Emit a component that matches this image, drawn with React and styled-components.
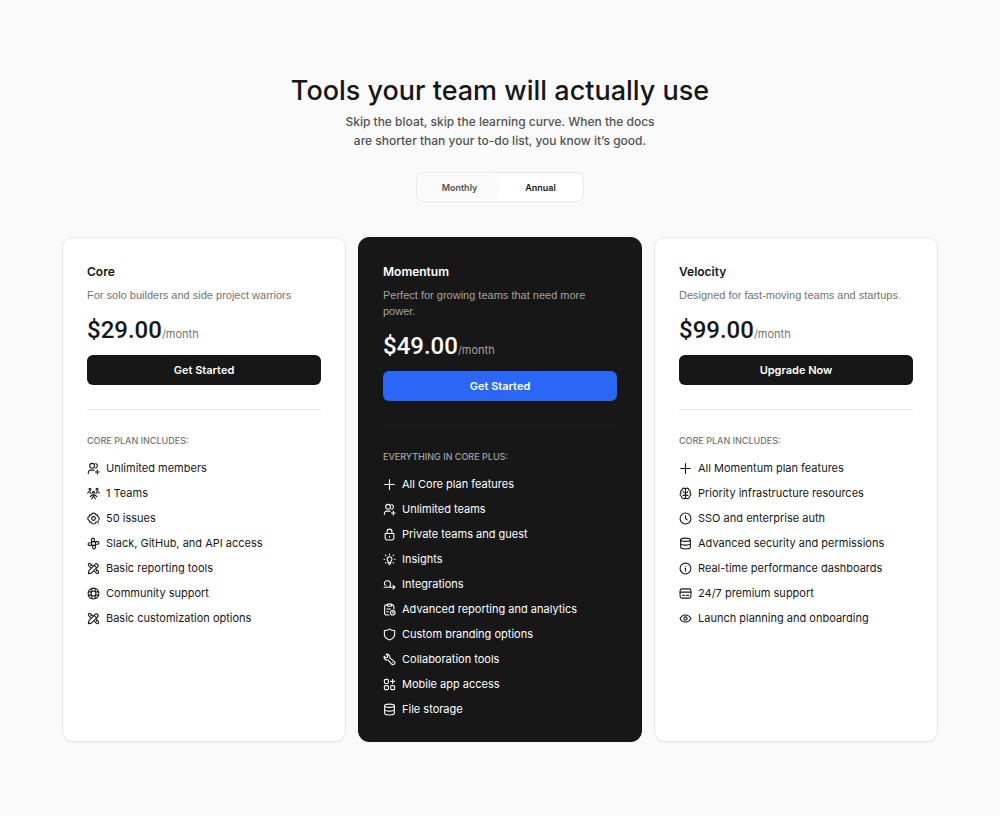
import { useState } from 'react';
import styled, { createGlobalStyle } from 'styled-components';

const icons = {
	members: <><circle cx="9.500" cy="7" r="4.500" /><path d="M16 2.700a4.500 4.500 0 0 1 0 8.600M2.500 21v-2a4 4 0 0 1 4-4H13M19 15v7M15.500 18.500h7" /></>,
	teams: <><circle cx="5.500" cy="4" r="1.800" /><circle cx="18.500" cy="4" r="1.800" /><circle cx="12" cy="9.500" r="1.800" /><path d="M1.500 11.500c.5-2 2-3 4-2.500L7.500 12M22.500 11.500c-.5-2-2-3-4-2.500L16.500 12M6 18c1.200-2.500 3-3.500 6-3.500s4.800 1 6 3.500M12 16.500L8.500 22M12 16.500l3.500 5.500" /></>,
	gear: <><path d="M18.500 19l-2-.3-1.700 2.200c-1.300 1.300-4.300 1.300-5.600 0l-1.700-2.200-2.800.3L4.300 16 2.200 14.300c-.9-1.300-.9-3.300 0-4.600L4.300 8l.4-3 2.800.3 1.700-2.200c1.300-1.300 4.300-1.300 5.600 0l1.700 2.200 2.800-.3.4 3 2.100 1.700c.9 1.300.9 3.300 0 4.600" /><circle cx="12" cy="12" r="3.500" /><path d="M20.500 15.500v3.500M20.500 22v.1" /></>,
	slack: <path d="M8.500 14V4.500a2.500 2.500 0 0 1 5 0V9M10 8.500h9.500a2.500 2.500 0 0 1 0 5H15M15.500 10v9.500a2.500 2.500 0 0 1-5 0V15M14 15.500H4.500a2.500 2.500 0 0 1 0-5H9" />,
	tools: <><path d="M7 10.500L3 6.500a2.500 2.500 0 0 1 3.500-3.500l4 4M13.500 17l4 4a2.500 2.500 0 0 0 3.500-3.500l-4-4" /><path d="M2.500 21.500l1-5.500L16 3.500c1.500-1.500 6 3 4.500 4.500L8 20.500zM13.500 6.500l4 4M7 6.500L8.500 5M17.500 17l1.500-1.500" /></>,
	support: <><circle cx="12" cy="12" r="10" /><circle cx="12" cy="12" r="4.500" /><path d="M9 8.500V2.700M15 8.500V2.700M9 15.500v5.800M15 15.500v5.800M2.700 9h5.800M2.700 15h5.800M15.500 9h5.800M15.500 15h5.800" /></>,
	plus: <path d="M12 3v18M3 12h18" />,
	lock: <><path d="M4 10h16v8.500a3.500 3.500 0 0 1-3.500 3.500h-9A3.500 3.500 0 0 1 4 18.500zM7.500 10V6.500a4.500 4.500 0 0 1 9 0V10" /><path d="M12 15.500v1.500" /></>,
	insight: <><path d="M9.500 17v-1.800A4.800 4.800 0 0 1 7.500 11.300a4.500 4.500 0 0 1 9 0c0 1.700-.7 3-2 3.900V18c0 4-5 4-5 0zM9.500 17.500h5" /><path d="M12 2v1.500M3 11.500H1.800M22.200 11.500H21M5.300 4.800l-1-1M18.700 4.800l1-1M4.500 18.500l1-1M19.500 18.500l-1-1" /></>,
	integration: <path d="M2 17h7c3 0 5-2.500 5-6s-2.500-6-5.700-6S2.500 7.500 2.500 10.500c0 1.700 1 3 3 3M13 17h9M18.500 13.500L22 17l-3.500 3.500" />,
	report: <><path d="M8 3.500H6a3 3 0 0 0-3 3V19a3 3 0 0 0 3 3h5M16 3.500h1a3 3 0 0 1 3 3V11" /><rect x="8" y="2" width="8" height="4" rx="1.500" /><path d="M7 11h7M7 16h3" /><circle cx="18" cy="18" r="4.200" /><path d="M18 16v2h1.500" /></>,
	shield: <path d="M12 2c3 2 6 2.700 9.500 2.700V11.500c0 5.500-4 8.500-9.500 10.500-5.500-2-9.500-5-9.500-10.500V4.700C6 4.700 9 4 12 2z" />,
	wrench: <><path d="M12.500 9c.5-2.500-.2-4.200-1.700-5.500C9.500 2.200 7.500 1.700 5.700 2.200l3.200 3.300-.7 2.700-2.700.7L2.200 5.700c-.6 2 0 4.400 1.500 5.800 1.400 1.300 3.300 1.800 5.300 1.300l7 7.700a3.400 3.400 0 0 0 5-4.700z" /><path d="M17.500 17.500v.1" /></>,
	apps: <><rect x="2.500" y="2.500" width="7.500" height="7.500" rx="2" /><rect x="2.500" y="14" width="7.500" height="7.500" rx="2" /><rect x="14" y="14" width="7.500" height="7.500" rx="2" /><path d="M17.800 2.500v7.500M14 6.300h7.500" /></>,
	database: <><ellipse cx="12" cy="5" rx="9" ry="3" /><path d="M3 5v14c0 1.700 4 3 9 3s9-1.300 9-3V5M3 12c0 1.700 4 3 9 3s9-1.300 9-3" /></>,
	brain: <path d="M12 5c0-4-6.500-4-6 .5-3 .3-4 3.500-2 5.500-3 1.500-2.500 5.500.5 6-.2 5 7.500 6.500 7.500 2zM12 5c0-4 6.500-4 6 .5 3 .3 4 3.500 2 5.500 3 1.500 2.500 5.500-.5 6 .2 5-7.500 6.500-7.500 2M8 8.500c.5 2 2 2.500 4 2.500M16 8.500c-.5 2-2 2.500-4 2.500M7.500 15.500c1.500 0 3 0 4.500-1.500M16.500 15.500c-1.500 0-3 0-4.500-1.500" />,
	clock: <><circle cx="12" cy="12" r="10" /><path d="M12 7v5l3 2.500" /></>,
	info: <><circle cx="12" cy="12" r="10" /><path d="M11 11.500h1.200v5M12 7.700v.1" /></>,
	card: <><rect x="2" y="3.500" width="20" height="17" rx="3.500" /><path d="M2 9.500h20M7 15.500h3M14 15.500h4" /></>,
	eye: <><path d="M2 12c2-4 5.500-6.500 10-6.500S20 8 22 12c-2 4-5.500 6.500-10 6.500S4 16 2 12z" /><circle cx="12" cy="12" r="3" /></>,
};

const plans = [
	{
		name: 'Core',
		description: 'For solo builders and side project warriors',
		price: '$29.00',
		action: 'Get Started',
		label: 'CORE PLAN INCLUDES:',
		features: [
			['members', 'Unlimited members'],
			['teams', '1 Teams'],
			['gear', '50 issues'],
			['slack', 'Slack, GitHub, and API access'],
			['tools', 'Basic reporting tools'],
			['support', 'Community support'],
			['tools', 'Basic customization options'],
		],
	},
	{
		name: 'Momentum',
		description: 'Perfect for growing teams that need more power.',
		price: '$49.00',
		action: 'Get Started',
		label: 'EVERYTHING IN CORE PLUS:',
		featured: true,
		features: [
			['plus', 'All Core plan features'],
			['members', 'Unlimited teams'],
			['lock', 'Private teams and guest'],
			['insight', 'Insights'],
			['integration', 'Integrations'],
			['report', 'Advanced reporting and analytics'],
			['shield', 'Custom branding options'],
			['wrench', 'Collaboration tools'],
			['apps', 'Mobile app access'],
			['database', 'File storage'],
		],
	},
	{
		name: 'Velocity',
		description: 'Designed for fast-moving teams and startups.',
		price: '$99.00',
		action: 'Upgrade Now',
		label: 'CORE PLAN INCLUDES:',
		features: [
			['plus', 'All Momentum plan features'],
			['brain', 'Priority infrastructure resources'],
			['clock', 'SSO and enterprise auth'],
			['database', 'Advanced security and permissions'],
			['info', 'Real-time performance dashboards'],
			['card', '24/7 premium support'],
			['eye', 'Launch planning and onboarding'],
		],
	},
];

export default function App() {
	const [period, setPeriod] = useState('Annual');

	return (
		<Page>
			<GlobalStyle />
			<Header>
				<Title>Tools your team will actually use</Title>
				<Subtitle>
					Skip the bloat, skip the learning curve. When the docs
					<br />
					are shorter than your to-do list, you know it’s good.
				</Subtitle>
			</Header>
			<Toggle role="group" aria-label="Billing period">
				{['Monthly', 'Annual'].map((name) => (
					<ToggleButton
						key={name}
						type="button"
						aria-pressed={period === name}
						$active={period === name}
						onClick={() => setPeriod(name)}
					>
						{name}
					</ToggleButton>
				))}
			</Toggle>
			<Plans>
				{plans.map((plan) => (
					<Card key={plan.name} $featured={plan.featured}>
						<PlanName>{plan.name}</PlanName>
						<Description $featured={plan.featured}>{plan.description}</Description>
						<PriceRow>
							<Price>{plan.price}</Price>
							<Period $featured={plan.featured}>/month</Period>
						</PriceRow>
						<Action type="button" $featured={plan.featured}>{plan.action}</Action>
						<Divider $featured={plan.featured} />
						<ListLabel $featured={plan.featured}>{plan.label}</ListLabel>
						<Features>
							{plan.features.map(([icon, text]) => (
								<Feature key={text}>
									<Icon viewBox="0 0 24 24" aria-hidden="true">{icons[icon]}</Icon>
									{text}
								</Feature>
							))}
						</Features>
					</Card>
				))}
			</Plans>
		</Page>
	);
}

const GlobalStyle = createGlobalStyle`
	* {
		box-sizing: border-box;
	}
	body {
		margin: 0;
		background: #fafafa;
		color: #171717;
		font-family: Inter, "Liberation Sans", sans-serif;
	}
	h1, h2, h3, p, ul {
		margin: 0;
		padding: 0;
	}
	button {
		font-family: inherit;
		cursor: pointer;
	}
`;

const Page = styled.main`
	display: flex;
	flex-direction: column;
	align-items: center;
	padding: 73px 24px;
`;

const Header = styled.header`
	text-align: center;
`;

const Title = styled.h1`
	font-size: 27px;
	line-height: 36px;
	font-weight: 500;
`;

const Subtitle = styled.p`
	margin-top: 3px;
	color: #525252;
	font-size: 12px;
	line-height: 19px;
	font-weight: 500;
`;

const Toggle = styled.div`
	display: flex;
	margin: 22px 0 35px;
	padding: 2px;
	background: #fff;
	border: 1px solid #e8e8e8;
	border-radius: 8px;
`;

const ToggleButton = styled.button`
	width: 81px;
	height: 24px;
	padding: 0;
	border: 0;
	border-radius: 6px;
	background: ${(props) => (props.$active ? '#fff' : '#fafafa')};
	color: ${(props) => (props.$active ? '#171717' : '#525252')};
	font-size: 9px;
	font-weight: 600;
`;

const Plans = styled.div`
	display: grid;
	grid-template-columns: repeat(3, 1fr);
	gap: 12px;
	width: 100%;
	max-width: 876px;

	@media (max-width: 760px) {
		grid-template-columns: 1fr;
	}
`;

const Card = styled.section`
	padding: 24px;
	background: ${(props) => (props.$featured ? '#171717' : '#fff')};
	border: 1px solid ${(props) => (props.$featured ? '#171717' : '#e8e8e8')};
	border-radius: 11px;
	color: ${(props) => (props.$featured ? '#fff' : '#171717')};
	box-shadow: 0 1px 2px rgba(0, 0, 0, 0.04);
`;

const PlanName = styled.h2`
	font-size: 12px;
	line-height: 20px;
	font-weight: 600;
`;

const Description = styled.p`
	margin-top: 5px;
	color: ${(props) => (props.$featured ? '#a3a3a3' : '#737373')};
	font-family: "Liberation Sans", Arial, sans-serif;
	font-size: 11px;
	line-height: 16px;
`;

const PriceRow = styled.div`
	display: flex;
	align-items: baseline;
	margin: 11px 0 5px;
	line-height: 32px;
`;

const Price = styled.span`
	font-family: Roboto, Inter, sans-serif;
	font-size: 24px;
	font-weight: 500;
`;

const Period = styled.span`
	color: ${(props) => (props.$featured ? '#a3a3a3' : '#737373')};
	font-size: 11px;
`;

const Action = styled.button`
	display: block;
	width: 100%;
	height: 30px;
	border: 0;
	border-radius: 6px;
	background: ${(props) => (props.$featured ? '#2b67f6' : '#171717')};
	color: #fff;
	font-size: 11px;
	font-weight: 600;
`;

const Divider = styled.hr`
	height: 1px;
	margin: 24px 0;
	border: 0;
	background: ${(props) => (props.$featured ? '#222' : '#e5e5e5')};
`;

const ListLabel = styled.h3`
	color: ${(props) => (props.$featured ? '#a3a3a3' : '#737373')};
	font-size: 9px;
	line-height: 14px;
	font-weight: 500;
`;

const Features = styled.ul`
	display: grid;
	gap: 9px;
	margin-top: 12px;
	list-style: none;
`;

const Feature = styled.li`
	display: flex;
	align-items: center;
	gap: 6px;
	font-size: 11px;
	line-height: 16px;
	font-weight: 400;
`;

const Icon = styled.svg`
	flex: none;
	width: 13px;
	height: 13px;
	fill: none;
	stroke: currentColor;
	stroke-width: 2;
	stroke-linecap: round;
	stroke-linejoin: round;
`;
